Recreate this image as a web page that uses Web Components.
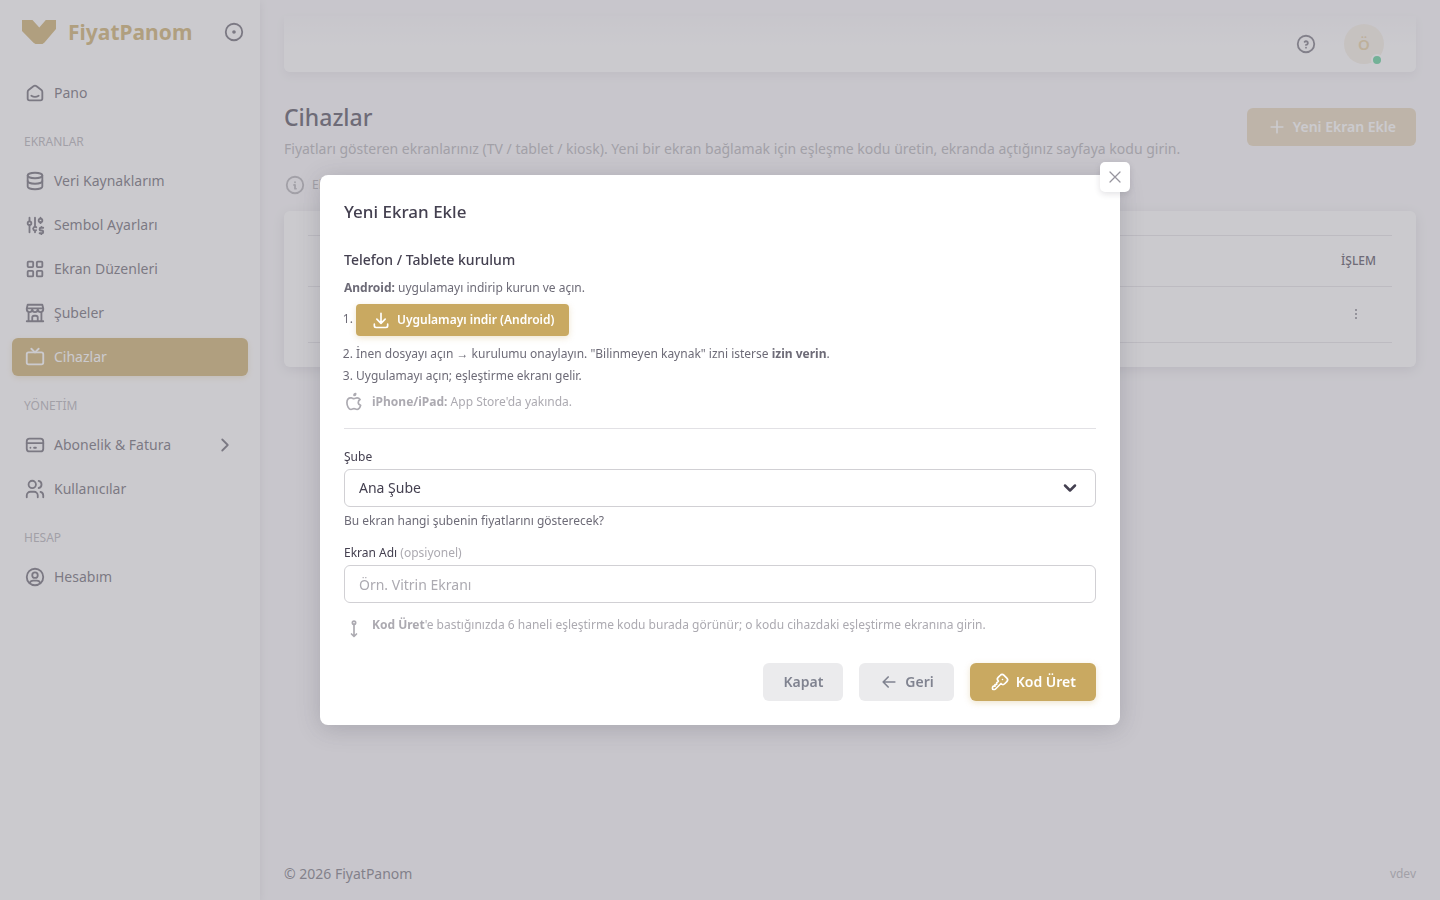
<!DOCTYPE html>
<html lang="tr">
<head>
<meta charset="utf-8">
<meta name="viewport" content="width=device-width, initial-scale=1">
<title>Cihazlar - FiyatPanom</title>
<style>
  :root {
    --primary: #c9a961;
    --heading: #444050;
    --body: #6d6b77;
    --muted: #acaab1;
    --line: #e2e1e5;
    --page: #f8f7fa;
  }
  body {
    margin: 0;
    background: var(--page);
    color: var(--body);
    font: 14px/22px "Noto Sans", "Open Sans", sans-serif;
  }
</style>
</head>
<body>
<fp-app></fp-app>

<script>
const ICONS = {
  home: '<path d="M19 8.7l-5.3-4.1a2.8 2.8 0 0 0-3.4 0L5 8.7A2.7 2.7 0 0 0 4 10.8V18a2 2 0 0 0 2 2h12a2 2 0 0 0 2-2v-7.2c0-.8-.4-1.6-1-2.1z"/><path d="M16 15c-2.2 1.3-5.8 1.3-8 0"/>',
  database: '<ellipse cx="12" cy="6" rx="8" ry="3"/><path d="M4 6v6c0 1.7 3.6 3 8 3s8-1.3 8-3V6"/><path d="M4 12v6c0 1.7 3.6 3 8 3s8-1.3 8-3v-6"/>',
  adjust: '<circle cx="6" cy="10" r="2"/><path d="M6 4v4M6 12v8M13.4 14.5a2 2 0 1 0-.2 3.1M12 4v10M12 18v2"/><circle cx="18" cy="7" r="2"/><path d="M18 4v1M18 9v1M21 15h-2.5a1.5 1.5 0 0 0 0 3h1a1.5 1.5 0 0 1 0 3H17M19 21v1M19 14v1"/>',
  grid: '<rect x="4" y="4" width="6" height="6" rx="1"/><rect x="14" y="4" width="6" height="6" rx="1"/><rect x="4" y="14" width="6" height="6" rx="1"/><rect x="14" y="14" width="6" height="6" rx="1"/>',
  store: '<path d="M3 21h18M3 7v1a3 3 0 0 0 6 0V7m0 1a3 3 0 0 0 6 0V7m0 1a3 3 0 0 0 6 0V7H3l1-4h16l1 4M5 21V10.9M19 21V10.9M9 21v-4a2 2 0 0 1 2-2h2a2 2 0 0 1 2 2v4"/>',
  tv: '<rect x="3" y="7" width="18" height="13" rx="2"/><path d="M16 3l-4 4-4-4"/>',
  card: '<rect x="3" y="5" width="18" height="14" rx="3"/><path d="M3 10h18M7 15h.01M11 15h2"/>',
  users: '<circle cx="9" cy="7" r="4"/><path d="M3 21v-2a4 4 0 0 1 4-4h4a4 4 0 0 1 4 4v2M16 3.1a4 4 0 0 1 0 7.8M21 21v-2a4 4 0 0 0-3-3.8"/>',
  user: '<circle cx="12" cy="12" r="9"/><circle cx="12" cy="10" r="3"/><path d="M6.2 18.8A4 4 0 0 1 10 16h4a4 4 0 0 1 3.8 2.9"/>',
  dot: '<circle cx="12" cy="12" r="9"/><circle cx="12" cy="12" r="1"/>',
  help: '<circle cx="12" cy="12" r="9"/><path d="M12 16v.01M12 13a2 2 0 0 0 .9-3.8 2 2 0 0 0-2.4.5"/>',
  info: '<circle cx="12" cy="12" r="9"/><path d="M12 9h.01M11 12h1v4h1"/>',
  right: '<path d="M9 6l6 6-6 6"/>',
  down: '<path d="M6 9l6 6 6-6"/>',
  plus: '<path d="M12 5v14M5 12h14"/>',
  close: '<path d="M18 6L6 18M6 6l12 12"/>',
  back: '<path d="M5 12h14M5 12l6 6M5 12l6-6"/>',
  download: '<path d="M4 17v2a2 2 0 0 0 2 2h12a2 2 0 0 0 2-2v-2M7 11l5 5 5-5M12 4v12"/>',
  key: '<path d="M16.6 3.8l3.6 3.6a2.9 2.9 0 0 1 0 4.1l-2.6 2.6a2.9 2.9 0 0 1-4.1 0l-.3-.3-6.6 6.6a2 2 0 0 1-1.2.6H4a1 1 0 0 1-1-1v-1.2a2 2 0 0 1 .5-1.3L4 17h2v-2h2v-2l2.1-2.1-.3-.3a2.9 2.9 0 0 1 0-4.1l2.6-2.6a2.9 2.9 0 0 1 4.2-.1zM15 9h.01"/>',
  apple: '<path d="M8.3 7.1C5.1 7.1 3.5 10 3.5 13c0 3.7 2.4 8 4.9 8 1.4 0 2.2-1 3.6-1s2.2 1 3.6 1c1.9 0 3.7-2.6 4.4-5-1.7-.6-2.9-1.7-2.9-3.5 0-1.6.9-2.7 2.2-3.5-.9-1.2-2-1.9-3.6-1.9-1.6 0-2.2.9-3.7.9s-2.200-.9-3.200-.9zM12 4a2 2 0 0 0 2-2 2 2 0 0 0-2 2"/>',
  pin: '<circle cx="12" cy="4.5" r="2"/><path d="M12 6.5V21M9 18l3 3 3-3"/>',
  more: '<path d="M12 6h.01M12 12h.01M12 18h.01"/>'
};

class FpIcon extends HTMLElement {
  connectedCallback() {
    this.attachShadow({ mode: 'open' });
    this.shadowRoot.innerHTML = `
      <style>
        :host { display: inline-flex; flex: none; }
        svg {
          width: var(--icon, 22px);
          height: var(--icon, 22px);
          fill: none;
          stroke: currentColor;
          stroke-width: var(--stroke, 2);
          stroke-linecap: round;
          stroke-linejoin: round;
        }
      </style>
      <svg viewBox="0 0 24 24" aria-hidden="true">${ICONS[this.getAttribute('name')]}</svg>
    `;
  }
}
customElements.define('fp-icon', FpIcon);

class FpButton extends HTMLElement {
  connectedCallback() {
    const icon = this.getAttribute('icon');
    this.attachShadow({ mode: 'open' });
    this.shadowRoot.innerHTML = `
      <style>
        :host { display: inline-flex; --icon: 20px; }
        button {
          display: flex;
          align-items: center;
          gap: 6px;
          height: 38px;
          padding: 0 20px;
          border: 0;
          border-radius: 6px;
          background: var(--primary);
          color: #fff;
          font: 600 14px/22px "Noto Sans", "Open Sans", sans-serif;
          white-space: nowrap;
          cursor: pointer;
          box-shadow: 0 2px 6px rgba(201, 169, 97, 0.3);
        }
        :host([variant="label"]) button {
          background: #ebebed;
          color: #808390;
          box-shadow: none;
        }
        :host([size="sm"]) button {
          height: 32px;
          padding: 0 15px;
          border-radius: 4px;
          font-size: 12px;
        }
        button:disabled { background: #e5d3b4; box-shadow: none; cursor: default; }
      </style>
      <button type="button" ${this.hasAttribute('disabled') ? 'disabled' : ''}>
        ${icon ? `<fp-icon name="${icon}"></fp-icon>` : ''}<slot></slot>
      </button>
    `;
  }
}
customElements.define('fp-button', FpButton);

class FpNavItem extends HTMLElement {
  connectedCallback() {
    this.attachShadow({ mode: 'open' });
    this.shadowRoot.innerHTML = `
      <style>
        :host { display: block; }
        a {
          display: flex;
          align-items: center;
          gap: 8px;
          height: 38px;
          padding: 0 12px;
          border-radius: 6px;
          color: #5f5c69;
          text-decoration: none;
        }
        span { flex: 1; }
        :host([active]) a {
          background: var(--primary);
          color: #fff;
          box-shadow: 0 2px 6px rgba(201, 169, 97, 0.3);
        }
      </style>
      <a href="#">
        <fp-icon name="${this.getAttribute('icon')}"></fp-icon>
        <span><slot></slot></span>
        ${this.hasAttribute('expandable') ? '<fp-icon name="right"></fp-icon>' : ''}
      </a>
    `;
  }
}
customElements.define('fp-nav-item', FpNavItem);

class FpSidebar extends HTMLElement {
  connectedCallback() {
    this.attachShadow({ mode: 'open' });
    this.shadowRoot.innerHTML = `
      <style>
        :host {
          display: block;
          flex: none;
          width: 260px;
          background: #fff;
          box-shadow: 0 2px 8px rgba(47, 43, 61, 0.12);
        }
        .brand {
          display: flex;
          align-items: center;
          height: 64px;
          padding: 0 15px 0 22px;
        }
        .brand a {
          display: flex;
          flex: 1;
          align-items: center;
          gap: 12px;
          color: var(--primary);
          font-size: 21px;
          font-weight: 700;
          text-decoration: none;
        }
        .brand button {
          display: flex;
          padding: 0;
          border: 0;
          background: none;
          color: #5f5c69;
        }
        nav {
          display: flex;
          flex-direction: column;
          gap: 6px;
          padding: 10px 12px;
        }
        h2 {
          margin: 0;
          padding: 14px 12px 4px;
          color: var(--muted);
          font-size: 12px;
          font-weight: 400;
          line-height: 20px;
        }
      </style>
      <div class="brand">
        <a href="#">
          <svg width="34" height="24" viewBox="0 0 34 24" fill="currentColor" aria-hidden="true">
            <path d="M0 0h10.5L17.3 7.5 23.8 0H34v9L22.5 22.5 20.500 24h-7L11.500 22.800 0 11z"/>
          </svg>
          FiyatPanom
        </a>
        <button type="button" aria-label="Menüyü sabitle"><fp-icon name="dot"></fp-icon></button>
      </div>
      <nav>
        <fp-nav-item icon="home">Pano</fp-nav-item>
        <h2>EKRANLAR</h2>
        <fp-nav-item icon="database">Veri Kaynaklarım</fp-nav-item>
        <fp-nav-item icon="adjust">Sembol Ayarları</fp-nav-item>
        <fp-nav-item icon="grid">Ekran Düzenleri</fp-nav-item>
        <fp-nav-item icon="store">Şubeler</fp-nav-item>
        <fp-nav-item icon="tv" active>Cihazlar</fp-nav-item>
        <h2>YÖNETİM</h2>
        <fp-nav-item icon="card" expandable>Abonelik &amp; Fatura</fp-nav-item>
        <fp-nav-item icon="users">Kullanıcılar</fp-nav-item>
        <h2>HESAP</h2>
        <fp-nav-item icon="user">Hesabım</fp-nav-item>
      </nav>
    `;
  }
}
customElements.define('fp-sidebar', FpSidebar);

class FpNavbar extends HTMLElement {
  connectedCallback() {
    this.attachShadow({ mode: 'open' });
    this.shadowRoot.innerHTML = `
      <style>
        :host {
          display: flex;
          align-items: center;
          justify-content: flex-end;
          gap: 27px;
          height: 56px;
          margin-top: 16px;
          padding: 0 32px;
          border-radius: 0 0 6px 6px;
          background: linear-gradient(var(--page), #fff 60%);
          box-shadow: 0 4px 8px rgba(47, 43, 61, 0.08);
          box-sizing: border-box;
        }
        button {
          display: flex;
          padding: 0;
          border: 0;
          background: none;
          color: inherit;
          font: inherit;
        }
        .avatar {
          position: relative;
          align-items: center;
          justify-content: center;
          width: 40px;
          height: 40px;
          border-radius: 50%;
          background: #f5eee3;
          color: #e3ca98;
          font-size: 15px;
          font-weight: 600;
        }
        .avatar::after {
          content: "";
          position: absolute;
          right: 1px;
          bottom: -2px;
          width: 8px;
          height: 8px;
          border: 2px solid #fff;
          border-radius: 50%;
          background: #4fcc90;
        }
      </style>
      <button type="button" aria-label="Yardım"><fp-icon name="help"></fp-icon></button>
      <button type="button" class="avatar">Ö</button>
    `;
  }
}
customElements.define('fp-navbar', FpNavbar);

class FpDevices extends HTMLElement {
  connectedCallback() {
    this.attachShadow({ mode: 'open' });
    this.shadowRoot.innerHTML = `
      <style>
        :host { display: block; padding-top: 30px; }
        header {
          display: flex;
          align-items: flex-start;
          justify-content: space-between;
        }
        h1 {
          margin: 0 0 6px;
          color: var(--heading);
          font-size: 23px;
          font-weight: 500;
          line-height: 30px;
        }
        p { margin: 0; color: var(--muted); }
        fp-button { margin-top: 6px; }
        .note {
          display: flex;
          align-items: center;
          gap: 6px;
          margin: 14px 0 15px;
          font-size: 12px;
        }
        .card {
          padding: 24px;
          border-radius: 6px;
          background: #fff;
          box-shadow: 0 3px 12px rgba(47, 43, 61, 0.14);
        }
        table { width: 100%; border-collapse: separate; border-spacing: 0; }
        th, td {
          padding: 0 16px;
          border-bottom: 1px solid var(--line);
          text-align: right;
        }
        th {
          height: 50px;
          border-top: 1px solid var(--line);
          color: var(--heading);
          font-size: 12px;
          font-weight: 500;
        }
        td { height: 55px; --icon: 16px; --stroke: 3; }
        td button {
          padding: 0 12px;
          border: 0;
          background: none;
          color: inherit;
          vertical-align: middle;
        }
      </style>
      <header>
        <div>
          <h1>Cihazlar</h1>
          <p>Fiyatları gösteren ekranlarınız (TV / tablet / kiosk). Yeni bir ekran bağlamak için eşleşme kodu üretin, ekranda açtığınız sayfaya kodu girin.</p>
        </div>
        <fp-button icon="plus" disabled>Yeni Ekran Ekle</fp-button>
      </header>
      <p class="note"><fp-icon name="info"></fp-icon>Ekran</p>
      <div class="card">
        <table>
          <thead><tr><th scope="col">İŞLEM</th></tr></thead>
          <tbody><tr><td><button type="button" aria-label="İşlemler"><fp-icon name="more"></fp-icon></button></td></tr></tbody>
        </table>
      </div>
    `;
  }
}
customElements.define('fp-devices', FpDevices);

class FpModal extends HTMLElement {
  connectedCallback() {
    this.attachShadow({ mode: 'open' });
    this.shadowRoot.innerHTML = `
      <style>
        :host {
          position: fixed;
          inset: 0;
          display: flex;
          align-items: center;
          justify-content: center;
          background: rgba(151, 149, 158, 0.5);
        }
        section {
          position: relative;
          width: 100%;
          max-width: 800px;
          padding: 24px;
          border-radius: 8px;
          background: #fff;
          box-shadow: 0 4px 24px rgba(47, 43, 61, 0.2);
          box-sizing: border-box;
        }
        .close {
          position: absolute;
          top: -13px;
          right: -10px;
          display: flex;
          padding: 5px;
          border: 0;
          border-radius: 5px;
          background: #fff;
          color: #97959e;
          box-shadow: 0 2px 6px rgba(47, 43, 61, 0.14);
          --icon: 20px;
          --stroke: 1.5;
        }
        h2 {
          margin: 0;
          color: var(--heading);
          font-size: 17px;
          font-weight: 500;
          line-height: 26px;
        }
      </style>
      <section role="dialog" aria-modal="true" aria-labelledby="title">
        <button type="button" class="close" aria-label="Kapat"><fp-icon name="close"></fp-icon></button>
        <h2 id="title"><slot name="title"></slot></h2>
        <slot></slot>
      </section>
    `;
  }
}
customElements.define('fp-modal', FpModal);

class FpPairForm extends HTMLElement {
  connectedCallback() {
    this.attachShadow({ mode: 'open' });
    this.shadowRoot.innerHTML = `
      <style>
        :host { display: block; font-size: 12px; line-height: 20px; }
        h3 {
          margin: 24px 0 7px;
          color: var(--heading);
          font-size: 14px;
          font-weight: 500;
          line-height: 22px;
        }
        p { margin: 0; }
        ol { margin: 6px 0 5px; padding-left: 12px; line-height: 22px; }
        li:first-child { margin-bottom: 7px; }
        li fp-button { vertical-align: middle; }
        .hint {
          display: flex;
          align-items: center;
          gap: 8px;
          color: var(--muted);
          --icon: 20px;
        }
        hr { margin: 16px 0 18px; border: 0; border-top: 1px solid var(--line); }
        label { display: block; margin-bottom: 2px; color: var(--heading); }
        small { color: var(--muted); font-size: 12px; }
        .select { display: grid; align-items: center; --icon: 20px; }
        .select > * { grid-area: 1 / 1; }
        .select fp-icon {
          justify-self: end;
          margin-right: 16px;
          color: var(--heading);
          pointer-events: none;
          --stroke: 3;
        }
        select, input {
          width: 100%;
          height: 38px;
          padding: 0 14px;
          border: 1px solid #d1d0d4;
          border-radius: 6px;
          background: #fff;
          color: var(--heading);
          font: 14px/22px "Noto Sans", "Open Sans", sans-serif;
          box-sizing: border-box;
          appearance: none;
        }
        input::placeholder { color: var(--muted); opacity: 1; }
        .help { margin: 4px 0 12px; }
        .code { margin-top: 12px; align-items: flex-start; }
        .code fp-icon { margin-top: 4px; }
        footer {
          display: flex;
          justify-content: flex-end;
          gap: 16px;
          margin-top: 24px;
        }
      </style>
      <h3>Telefon / Tablete kurulum</h3>
      <p><b>Android:</b> uygulamayı indirip kurun ve açın.</p>
      <ol>
        <li><fp-button size="sm" icon="download">Uygulamayı indir (Android)</fp-button></li>
        <li>İnen dosyayı açın → kurulumu onaylayın. "Bilinmeyen kaynak" izni isterse <b>izin verin</b>.</li>
        <li>Uygulamayı açın; eşleştirme ekranı gelir.</li>
      </ol>
      <div class="hint"><fp-icon name="apple"></fp-icon><span><b>iPhone/iPad:</b> App Store'da yakında.</span></div>
      <hr>
      <label for="branch">Şube</label>
      <div class="select">
        <select id="branch"><option>Ana Şube</option></select>
        <fp-icon name="down"></fp-icon>
      </div>
      <p class="help">Bu ekran hangi şubenin fiyatlarını gösterecek?</p>
      <label for="name">Ekran Adı <small>(opsiyonel)</small></label>
      <input id="name" type="text" placeholder="Örn. Vitrin Ekranı">
      <div class="hint code"><fp-icon name="pin"></fp-icon><span><b>Kod Üret</b>'e bastığınızda 6 haneli eşleştirme kodu burada görünür; o kodu cihazdaki eşleştirme ekranına girin.</span></div>
      <footer>
        <fp-button variant="label">Kapat</fp-button>
        <fp-button variant="label" icon="back">Geri</fp-button>
        <fp-button icon="key">Kod Üret</fp-button>
      </footer>
    `;
  }
}
customElements.define('fp-pair-form', FpPairForm);

class FpApp extends HTMLElement {
  connectedCallback() {
    this.attachShadow({ mode: 'open' });
    this.shadowRoot.innerHTML = `
      <style>
        :host { display: flex; min-height: 100vh; }
        main {
          display: flex;
          flex: 1;
          flex-direction: column;
          min-width: 0;
          padding: 0 24px;
        }
        footer {
          display: flex;
          justify-content: space-between;
          margin-top: auto;
          padding-bottom: 15px;
        }
        small { color: var(--muted); font-size: 12px; }
      </style>
      <fp-sidebar></fp-sidebar>
      <main>
        <fp-navbar></fp-navbar>
        <fp-devices></fp-devices>
        <footer><span>© 2026 FiyatPanom</span><small>vdev</small></footer>
      </main>
      <fp-modal>
        <span slot="title">Yeni Ekran Ekle</span>
        <fp-pair-form></fp-pair-form>
      </fp-modal>
    `;
  }
}
customElements.define('fp-app', FpApp);
</script>
</body>
</html>
